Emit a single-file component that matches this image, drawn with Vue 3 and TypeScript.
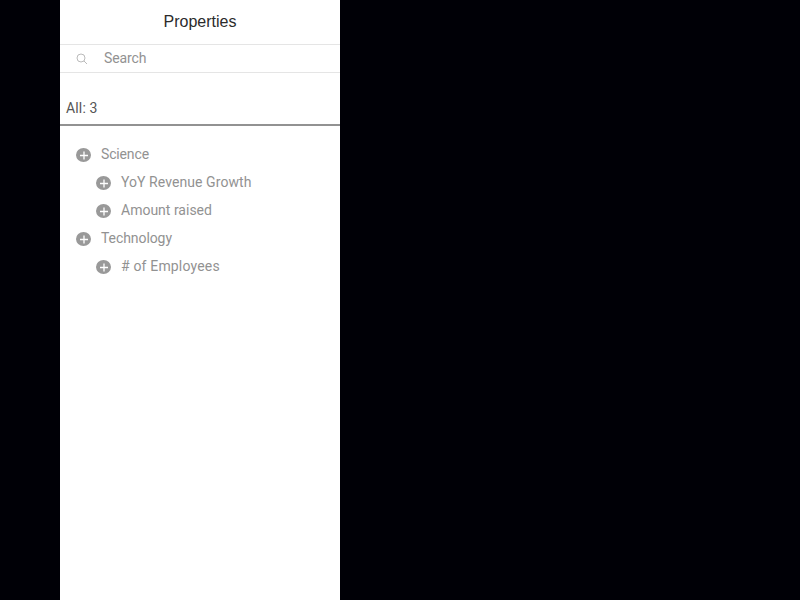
<script setup lang="ts">
interface TreeRow {
  label: string
  depth: number
  tracking: number
}

const rows: TreeRow[] = [
  { label: 'Science', depth: 0, tracking: -0.15 },
  { label: 'YoY Revenue Growth', depth: 1, tracking: 0.07 },
  { label: 'Amount raised', depth: 1, tracking: 0 },
  { label: 'Technology', depth: 0, tracking: -0.08 },
  { label: '# of Employees', depth: 1, tracking: 0.17 },
]
const total = rows.filter((row) => row.depth === 1).length
</script>

<template>
  <main class="page">
    <aside class="panel">
      <h1 class="title">Properties</h1>
      <div class="search">
        <svg class="search-icon" viewBox="0 0 12 12" aria-hidden="true">
          <circle cx="5" cy="5" r="4" />
          <path d="M8 8l3 3" />
        </svg>
        <span class="hint">Search</span>
      </div>
      <div class="summary">All: {{ total }}</div>
      <ul class="tree">
        <li v-for="row in rows" :key="row.label" class="row" :class="{ child: row.depth === 1 }">
          <svg class="add" viewBox="0 0 15 14" aria-hidden="true">
            <ellipse cx="7.5" cy="7" rx="7.5" ry="7" />
            <path d="M4 7.5h8M8 3.5v8" />
          </svg>
          <span class="label" :style="{ letterSpacing: row.tracking + 'px' }">{{ row.label }}</span>
        </li>
      </ul>
    </aside>
  </main>
</template>

<style>
body {
  background: #000006;
}
</style>

<style scoped>
.page {
  height: 100vh;
  padding-left: 60px;
  box-sizing: border-box;
  background: #000006;
  font-family: Roboto, "Liberation Sans", sans-serif;
  font-size: 14px;
  color: #929292;
}
.panel {
  width: 280px;
  height: 100%;
  background: #fff;
}
.title {
  margin: 0;
  height: 44px;
  font: 400 16px/43px "Liberation Sans", Arial, sans-serif;
  text-align: center;
  color: #2b2b2b;
}
.search {
  height: 27px;
  display: flex;
  align-items: center;
  gap: 16px;
  padding-left: 16px;
  border-top: 1px solid #e5e5e5;
  border-bottom: 1px solid #e5e5e5;
}
.hint {
  letter-spacing: -0.1px;
}
.hint,
.label {
  padding-bottom: 2px;
}
.search-icon {
  width: 12px;
  height: 12px;
  fill: none;
  stroke: #aaa;
  stroke-width: 0.8;
}
.summary {
  height: 53px;
  box-sizing: border-box;
  padding: 19px 6px 0;
  margin-bottom: 15px;
  line-height: 32px;
  letter-spacing: 0.15px;
  border-bottom: 2px solid #929292;
  color: #555;
}
.tree {
  list-style: none;
  margin: 0;
  padding: 0 16px;
}
.row {
  height: 28px;
  display: flex;
  align-items: center;
  gap: 10px;
}
.child {
  padding-left: 20px;
}
.add {
  width: 15px;
  height: 14px;
  fill: #999;
}
.add path {
  stroke: #fff;
  stroke-width: 1.3;
}
</style>
